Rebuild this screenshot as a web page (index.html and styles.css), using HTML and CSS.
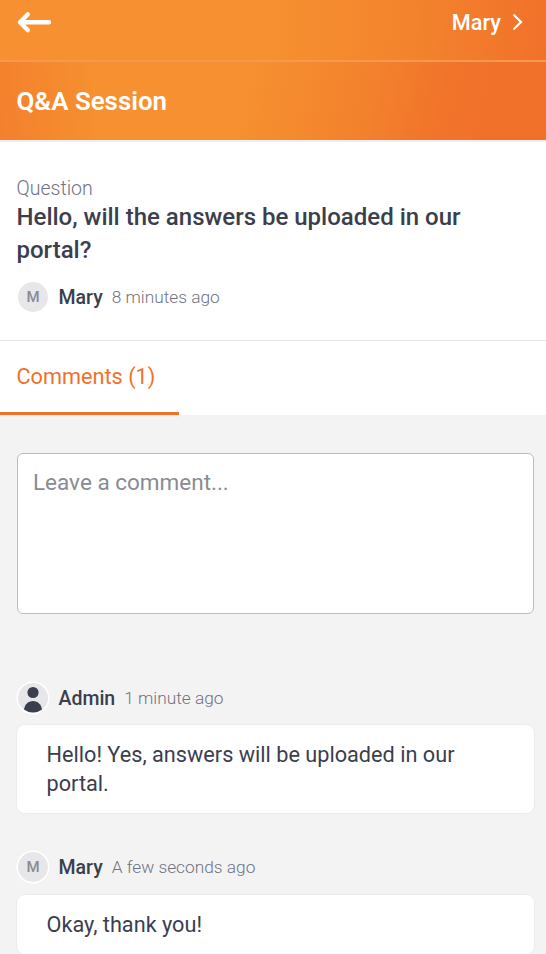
FILE: index.html
```html
<!DOCTYPE html>
<html lang="en">
<head>
<meta charset="utf-8">
<title>Q&amp;A Session</title>
<link rel="stylesheet" href="styles.css">
</head>
<body>
<header class="topbar">
  <svg class="back" width="36" height="24" viewBox="0 0 36 24"><path d="M11.800 4.300 4 12.300l7.800 7.800M4.500 12.300h28.500" fill="none" stroke="#fff" stroke-width="4.400" stroke-linecap="round" stroke-linejoin="round"/></svg>
  <div class="user"><span>Mary</span><svg width="12" height="18" viewBox="0 0 12 18"><path d="M2.200 2.200 9 9l-6.800 6.800" fill="none" stroke="#fff" stroke-width="2.200" stroke-linecap="round" stroke-linejoin="miter"/></svg></div>
</header>
<div class="titlebar"><h1>Q&amp;A Session</h1></div>
<section class="question">
  <div class="label">Question</div>
  <h2>Hello, will the answers be uploaded in our<br>portal?</h2>
  <div class="author"><span class="avatar">M</span><span class="name">Mary</span><span class="time">8 minutes ago</span></div>
</section>
<nav class="tabs"><span class="tab">Comments (1)</span></nav>
<main class="comments">
  <textarea class="input" placeholder="Leave a comment..."></textarea>
  <article class="comment">
    <div class="author"><span class="avatar ringed"><svg width="30" height="30" viewBox="0 0 30 30"><circle cx="15" cy="9.500" r="5.600" fill="#3b3e4d"/><path d="M6 26.500C6.800 21.500 10 18 15 18s8.200 3.500 9 8.500Q20 29.500 15 29.500t-9-3z" fill="#3b3e4d"/></svg></span><span class="name">Admin</span><span class="time">1 minute ago</span></div>
    <p class="bubble">Hello! Yes, answers will be uploaded in our<br>portal.</p>
  </article>
  <article class="comment second">
    <div class="author"><span class="avatar ringed">M</span><span class="name">Mary</span><span class="time">A few seconds ago</span></div>
    <p class="bubble">Okay, thank you!</p>
  </article>
</main>
</body>
</html>
```
FILE: styles.css
```css
* { box-sizing: border-box; }
body {
  margin: 0;
  height: 954px;
  overflow: hidden;
  background: #f3f3f3;
  color: #3b3e4d;
  font-family: Roboto, "Liberation Sans", sans-serif;
}
h1, h2, p { margin: 0; }
.topbar {
  display: flex;
  justify-content: space-between;
  height: 62px;
  padding: 10px 22px 0 16px;
  border-bottom: 2px solid #f59a4c;
  background: linear-gradient(93deg, #f69030 0 50%, #f3832d 76%, #f1712a 100%) border-box;
  color: #fff;
}
.user {
  display: flex;
  align-items: center;
  gap: 11px;
  height: 24px;
  font-size: 21.700px;
  font-weight: 500;
}
.titlebar {
  height: 78px;
  padding: 24px 16.500px 0;
  background:
    linear-gradient(85deg, #f4802d 0, rgba(246, 144, 48, 0) 18%),
    linear-gradient(103deg, #f69030 0 45%, #f3822d 66%, #f1742a 80%, #f1712a 88%);
  color: #fff;
}
h1 { font-size: 25.900px; font-weight: 600; line-height: 30px; }
.question {
  height: 201px;
  padding: 37px 16.500px 0;
  border-top: 2px solid #eeeef0;
  border-bottom: 1px solid #e4e4e6;
  background: #fff;
}
.label { font-size: 19.500px; font-weight: 300; line-height: 20px; color: #70727f; }
h2 { padding-top: 2px; font-size: 24px; font-weight: 500; line-height: 33px; white-space: nowrap; }
.author { display: flex; align-items: center; height: 32px; }
.question .author { margin-top: 14px; }
.avatar {
  display: flex;
  align-items: center;
  justify-content: center;
  width: 30px;
  height: 30px;
  margin: 0 10.500px 0 1.500px;
  border-radius: 50%;
  background: #e7e7e9;
  color: #898b95;
  font-size: 15px;
  font-weight: 500;
}
.ringed { box-shadow: 0 0 0 1.500px #fff; }
.name { font-size: 19.500px; font-weight: 500; }
.time { margin-left: 9px; font-size: 17.300px; font-weight: 300; color: #70727f; }
.tabs { display: flex; height: 74px; background: #fff; }
.tab {
  width: 179px;
  height: 74px;
  padding: 22px 0 0 16.500px;
  border-bottom: 3px solid #f2712a;
  color: #f2712a;
  font-size: 21.700px;
  line-height: 28px;
}
.comments { padding: 38px 12px 0 17px; }
.input {
  display: block;
  width: 517px;
  height: 161px;
  padding: 14px 15px;
  border: 1px solid #bcbcbf;
  border-radius: 6px;
  outline: 0;
  resize: none;
  background: #fff;
  font: 22.500px/28px Roboto, "Liberation Sans", sans-serif;
}
.input::placeholder { color: #898b95; opacity: 1; }
.comment { margin-top: 68px; }
.comment .avatar { margin-left: 1px; }
.second { margin-top: 38px; }
.bubble {
  margin-top: 11px;
  padding: 15px 29.500px;
  border-radius: 8px;
  background: #fff;
  box-shadow: 0 0 1px 1px #ececee;
  font-size: 21.700px;
  line-height: 29px;
  white-space: nowrap;
}
.second .bubble { margin-top: 12px; }
```
